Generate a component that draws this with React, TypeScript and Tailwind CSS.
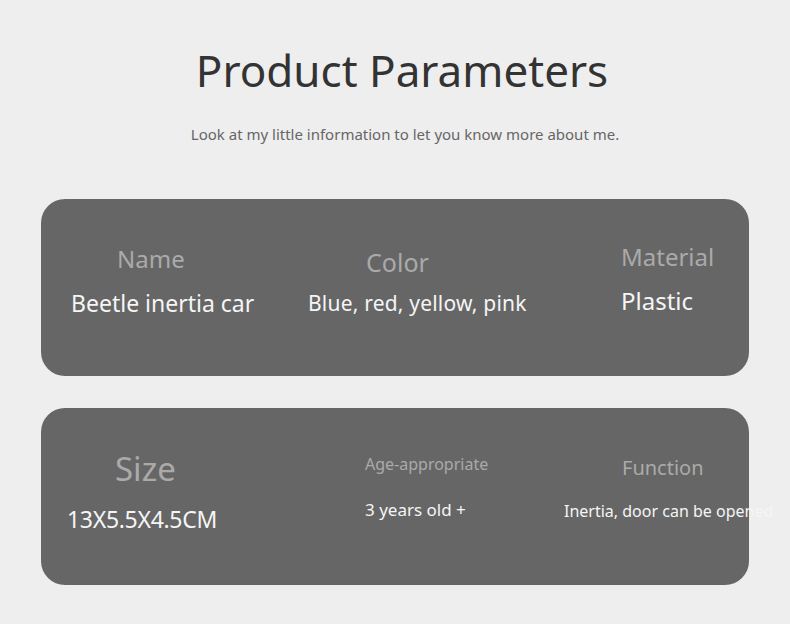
export default function App() {
  return (
    <div
      className="w-[790px] h-[624px] bg-[#eeeeee] overflow-hidden"
      style={{ fontFamily: '"Noto Sans", "Open Sans", sans-serif' }}
    >
      <div className="pt-[40px] pl-[20px] flex flex-col items-center">
        <h1 className="ml-[-6px] text-[44px] leading-[60px] text-[#333333] font-normal">
          Product Parameters
        </h1>
        <p className="mt-[24px] text-[15px] leading-[20px] text-[#666666]">
          Look at my little information to let you know more about me.
        </p>
      </div>

      <div className="mt-[55px] ml-[41px] w-[708px] h-[177px] rounded-[24px] bg-[#666666] flex pl-[30px]">
        <div className="w-[237px] shrink-0 flex flex-col">
          <div className="mt-[45px] ml-[46px] text-[24px] leading-[30px] text-[#aaaaaa]">Name</div>
          <div className="mt-[14px] text-[23px] leading-[30px] text-[#f5f5f5] whitespace-nowrap">Beetle inertia car</div>
        </div>
        <div className="w-[313px] shrink-0 flex flex-col">
          <div className="mt-[48px] ml-[58px] text-[25px] leading-[30px] text-[#aaaaaa]">Color</div>
          <div className="mt-[11px] text-[21px] leading-[30px] tracking-[0.2px] text-[#f5f5f5] whitespace-nowrap">Blue, red, yellow, pink</div>
        </div>
        <div className="flex-1 min-w-0 flex flex-col">
          <div className="mt-[43px] text-[24px] leading-[30px] text-[#aaaaaa]">Material</div>
          <div className="mt-[14px] text-[24px] leading-[30px] text-[#f5f5f5]">Plastic</div>
        </div>
      </div>

      <div className="mt-[32px] ml-[41px] w-[708px] h-[177px] rounded-[24px] bg-[#666666] flex pl-[26px]">
        <div className="w-[298px] shrink-0 flex flex-col">
          <div className="mt-[41px] ml-[48px] text-[33px] leading-[40px] text-[#aaaaaa]">Size</div>
          <div className="mt-[15px] text-[23px] leading-[30px] text-[#f5f5f5] tracking-[-0.3px] whitespace-nowrap">13X5.5X4.5CM</div>
        </div>
        <div className="w-[199px] shrink-0 flex flex-col">
          <div className="mt-[46px] text-[16px] leading-[20px] text-[#aaaaaa]">Age-appropriate</div>
          <div className="mt-[24px] text-[17px] leading-[24px] text-[#f5f5f5] whitespace-nowrap">3 years old +</div>
        </div>
        <div className="flex-1 min-w-0 flex flex-col">
          <div className="mt-[46px] ml-[58px] text-[20px] leading-[28px] text-[#aaaaaa]">Function</div>
          <div className="mt-[17px] text-[16px] leading-[24px] text-[#f5f5f5] whitespace-nowrap">Inertia, door can be opened</div>
        </div>
      </div>
    </div>
  );
}
